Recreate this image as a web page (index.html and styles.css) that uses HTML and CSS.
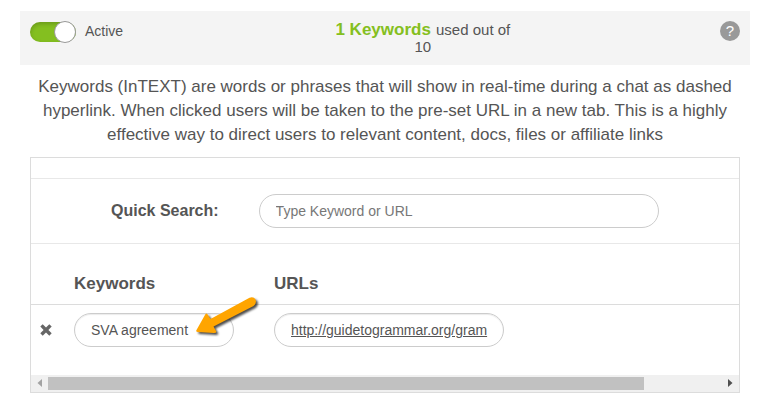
FILE: index.html
```html
<!DOCTYPE html>
<html lang="en">
<head>
    <meta charset="UTF-8">
    <meta name="viewport" content="width=device-width, initial-scale=1.0">
    <title>Keywords</title>
    <link rel="stylesheet" href="styles.css">
</head>
<body>

<div class="topbar">
    <label class="switch">
        <input type="checkbox" checked>
        <span>Active</span>
    </label>
    <div class="usage"><strong>1 Keywords</strong> used out of 10</div>
    <button class="help" type="button" aria-label="Help">?</button>
</div>

<p class="intro">Keywords (InTEXT) are words or phrases that will show in real-time during a chat as dashed hyperlink. When clicked users will be taken to the pre-set URL in a new tab. This is a highly effective way to direct users to relevant content, docs, files or affiliate links</p>

<div class="panel">
    <div class="search">
        <label for="search">Quick Search:</label>
        <input class="field" type="text" id="search" placeholder="Type Keyword or URL">
    </div>

    <table class="keywords">
        <thead>
            <tr>
                <th class="col-remove"></th>
                <th class="col-keyword">Keywords</th>
                <th>URLs</th>
            </tr>
        </thead>
        <tbody>
            <tr>
                <td class="col-remove">
                    <button class="remove" type="button" aria-label="Remove">
                        <svg width="12" height="12" viewBox="0 0 12 12"><path d="M2.7 0.3 6 3.5 9.3 0.3 11.7 2.6 8.4 6 11.7 9.3 9.3 11.7 6 8.5 2.7 11.7 0.3 9.3 3.6 6 0.3 2.6Z" fill="#666"/></svg>
                    </button>
                </td>
                <td class="col-keyword">
                    <input class="field keyword" type="text" value="SVA agreement" aria-label="Keyword">
                    <!-- pointer over the keyword field -->
                    <svg class="arrow" width="70" height="46" viewBox="0 0 70 46">
                        <path d="M5.500 35 L14.500 19 Q16 17.500 17 20 L19.500 24 L58.500 2.700 Q62.500 1 64.500 4.500 Q66 8.500 62.500 11 L22.500 31.500 L25 36 Q26 38 23 38 L7 37 Q4.500 37 5.500 35 Z" fill="#ffa500"/>
                    </svg>
                </td>
                <td>
                    <a class="field url" href="http://guidetogrammar.org/gram">http://guidetogrammar.org/gram</a>
                </td>
            </tr>
        </tbody>
    </table>

    <div class="scrollbar">
        <button type="button" aria-label="Scroll left"><svg width="5" height="8" viewBox="0 0 5 8"><path d="M5 0V8L0.500 4Z" fill="#a3a3a3"/></svg></button>
        <div class="track"><div class="thumb"></div></div>
        <button type="button" aria-label="Scroll right"><svg width="5" height="8" viewBox="0 0 5 8"><path d="M0 0V8L4.500 4Z" fill="#505050"/></svg></button>
    </div>
</div>

</body>
</html>
```
FILE: styles.css
```css
*,
*::after {
    box-sizing: border-box;
}
body {
    font-family: "Liberation Sans", Arial, sans-serif;
    font-size: 14px;
    color: #555;
    background-color: #fff;
    margin: 11px 29px 20px 20px;
}
button {
    border: none;
    background: none;
    padding: 0;
    cursor: pointer;
}
svg {
    display: block;
    flex: none;
}

/* Top bar */
.topbar {
    display: grid;
    grid-template-columns: 4fr 180px 3fr;
    align-items: start;
    background-color: #f4f4f4;
    padding: 10px;
    min-height: 54px;
}
.switch {
    display: flex;
    align-items: flex-start;
    gap: 9px;
    line-height: 20px;
}
.switch input {
    appearance: none;
    position: relative;
    width: 46px;
    height: 20px;
    margin: 1px 0;
    border-radius: 10px;
    background-color: #ccc;
}
.switch input:checked {
    background-color: #84bf20;
    box-shadow: inset 0 2px 4px rgba(0, 0, 0, 0.2);
}
.switch input::after {
    content: "";
    position: absolute;
    top: -1px;
    left: 0;
    width: 22px;
    height: 22px;
    border: 1px solid #999;
    border-radius: 50%;
    background-color: #fff;
}
.switch input:checked::after {
    left: 24px;
}
.usage {
    text-align: center;
    font-size: 15px;
    line-height: 17px;
}
.usage strong {
    margin-right: 1px;
    font-size: 17px;
    color: #84bf20;
}
.help {
    justify-self: end;
    width: 20px;
    height: 20px;
    border-radius: 50%;
    background-color: #999;
    color: #fff;
    font-family: inherit;
    font-size: 15px;
    line-height: 20px;
}

.intro {
    margin: 10px;
    text-align: center;
    font-size: 17px;
    line-height: 24px;
}

/* Keyword panel */
.panel {
    margin: 0 10px;
    padding-top: 20px;
    border: 1px solid #dcdcdc;
}
.search {
    display: flex;
    align-items: center;
    gap: 40px;
    padding: 15px 80px;
    border-top: 1px solid #e8e8e8;
    border-bottom: 1px solid #e8e8e8;
}
.search label {
    font-size: 16px;
    font-weight: bold;
}
.field {
    height: 34px;
    padding: 0 16px;
    border: 1px solid #ccc;
    border-radius: 17px;
    background-color: #fff;
    color: #555;
    font-family: inherit;
    font-size: 14px;
}
.search .field {
    flex: 1;
    min-width: 0;
}
.field::placeholder {
    color: #777;
}
.keywords {
    width: 100%;
    border-collapse: collapse;
    table-layout: fixed;
}
.keywords th {
    height: 60px;
    padding: 20px 0 0;
    border-bottom: 1px solid #dcdcdc;
    text-align: left;
    font-size: 17px;
}
.keywords td {
    padding: 8px 0 28px;
}
.keywords .col-remove {
    width: 43px;
    padding-left: 9px;
}
.keywords .col-keyword {
    width: 200px;
    position: relative;
}
.remove {
    display: block;
}
.keyword,
.url {
    display: block;
    box-shadow: inset 0 1px 1px rgba(0, 0, 0, 0.08);
}
.keyword {
    width: 160px;
}
.url {
    width: 230px;
    line-height: 32px;
    overflow: hidden;
}
.arrow {
    position: absolute;
    top: -10px;
    left: 117px;
    filter: drop-shadow(2px 2px 1px rgba(0, 0, 0, 0.7));
}

/* Horizontal scrollbar */
.scrollbar {
    display: flex;
    height: 17px;
    background-color: #f0f0f0;
}
.scrollbar button {
    display: flex;
    align-items: center;
    justify-content: center;
    width: 17px;
}
.track {
    flex: 1;
    padding: 2px 0;
}
.thumb {
    width: 88.4%;
    height: 13px;
    background-color: #c1c1c1;
}
```
